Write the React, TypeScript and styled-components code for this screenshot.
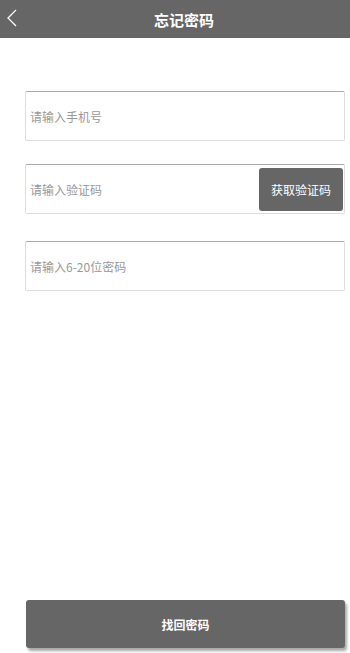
import styled, { createGlobalStyle } from "styled-components";

const GlobalStyle = createGlobalStyle`
  * { box-sizing: border-box; }
  body {
    margin: 0;
    background: #fff;
    font-family: "Microsoft YaHei", "Noto Sans CJK SC", "Noto Sans", sans-serif;
  }
`;

const Page = styled.div`
  display: flex;
  flex-direction: column;
  min-height: 653px;
  width: 350px;
`;

const Header = styled.header`
  position: relative;
  height: 38px;
  background: #666666;
  display: flex;
  align-items: center;
  justify-content: center;
  padding-left: 18px;
`;

const BackBtn = styled.button`
  position: absolute;
  left: 4px;
  top: 6px;
  width: 16px;
  height: 24px;
  padding: 0;
  border: none;
  background: none;
  display: flex;
  align-items: center;
  justify-content: center;
`;

const Title = styled.h1`
  margin: 0;
  color: #fff;
  font-size: 15px;
  font-weight: bold;
  line-height: 1;
`;

const Form = styled.div`
  display: flex;
  flex-direction: column;
  padding: 53px 5px 0 25px;
`;

const Field = styled.div<{ $gap?: number }>`
  display: flex;
  align-items: center;
  height: 50px;
  margin-top: ${(p) => p.$gap ?? 0}px;
  border: 1px solid #dddddd;
  border-top-color: #a9a9a9;
  border-radius: 2px;
  padding: 0 1px 0 4px;
`;

const Input = styled.input`
  flex: 1;
  min-width: 0;
  border: none;
  outline: none;
  background: transparent;
  font-family: inherit;
  font-size: 12px;
  color: #333;
  padding: 0;
  &::placeholder {
    color: #999999;
  }
`;

const CodeBtn = styled.button`
  width: 84px;
  height: 43px;
  border: none;
  border-radius: 3px;
  background: #666666;
  color: #fff;
  font-family: inherit;
  font-size: 12px;
  padding: 0;
`;

const Footer = styled.div`
  margin-top: auto;
  padding: 0 5px 5px 26px;
`;

const SubmitBtn = styled.button`
  width: 100%;
  height: 48px;
  border: none;
  border-radius: 3px;
  background: #666666;
  color: #fff;
  font-family: inherit;
  font-size: 12px;
  font-weight: bold;
  box-shadow: 2px 3px 3px rgba(0, 0, 0, 0.35);
`;

export default function App() {
  return (
    <>
      <GlobalStyle />
      <Page>
        <Header>
          <BackBtn aria-label="返回">
            <svg width="12" height="18" viewBox="0 0 12 18" fill="none">
              <path d="M10 1 L2 9 L10 17" stroke="#fff" strokeWidth="1.3" />
            </svg>
          </BackBtn>
          <Title>忘记密码</Title>
        </Header>
        <Form>
          <Field>
            <Input placeholder="请输入手机号" />
          </Field>
          <Field $gap={23}>
            <Input placeholder="请输入验证码" />
            <CodeBtn>获取验证码</CodeBtn>
          </Field>
          <Field $gap={27}>
            <Input placeholder="请输入6-20位密码" />
          </Field>
        </Form>
        <Footer>
          <SubmitBtn>找回密码</SubmitBtn>
        </Footer>
      </Page>
    </>
  );
}
